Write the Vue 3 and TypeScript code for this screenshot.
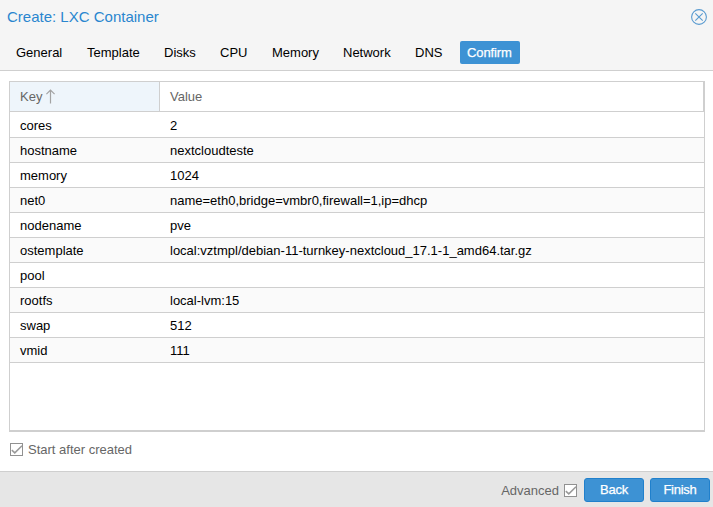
<script setup lang="ts">
import { ref } from 'vue'

interface Entry {
  key: string
  value: string
}

interface Tab {
  label: string
  width: number
}

const tabs: Tab[] = [
  { label: 'General', width: 62 },
  { label: 'Template', width: 68 },
  { label: 'Disks', width: 47 },
  { label: 'CPU', width: 43 },
  { label: 'Memory', width: 62 },
  { label: 'Network', width: 63 },
  { label: 'DNS', width: 44 },
  { label: 'Confirm', width: 60 },
]
const active = ref('Confirm')
const startAfter = ref(true)
const advanced = ref(true)

const entries: Entry[] = [
  { key: 'cores', value: '2' },
  { key: 'hostname', value: 'nextcloudteste' },
  { key: 'memory', value: '1024' },
  { key: 'net0', value: 'name=eth0,bridge=vmbr0,firewall=1,ip=dhcp' },
  { key: 'nodename', value: 'pve' },
  { key: 'ostemplate', value: 'local:vztmpl/debian-11-turnkey-nextcloud_17.1-1_amd64.tar.gz' },
  { key: 'pool', value: '' },
  { key: 'rootfs', value: 'local-lvm:15' },
  { key: 'swap', value: '512' },
  { key: 'vmid', value: '111' },
]
</script>

<template>
  <div class="window">
    <header class="head">
      <div class="titlebar">
        <span class="title">Create: LXC Container</span>
        <svg class="close" width="16" height="16" viewBox="0 0 16 16">
          <circle cx="8" cy="8" r="7.4" />
          <path d="M4.3 4.3 11.7 11.7M11.7 4.3 4.3 11.7" />
        </svg>
      </div>
      <nav class="tabs">
        <span
          v-for="tab in tabs"
          :key="tab.label"
          class="tab"
          :class="{ active: tab.label === active }"
          :style="{ width: tab.width + 'px' }"
          @click="active = tab.label"
        >{{ tab.label }}</span>
      </nav>
    </header>

    <main class="body">
      <section class="grid">
        <div class="columns">
          <div class="col sorted">
            <span>Key</span>
            <svg class="arrow" width="9" height="15" viewBox="0 0 9 15">
              <path d="M4.5 14.5V1M.4 5.2 4.5 1 8.6 5.2" />
            </svg>
          </div>
          <div class="col value">Value</div>
        </div>
        <div v-for="e in entries" :key="e.key" class="row">
          <span class="cell name">{{ e.key }}</span>
          <span class="cell">{{ e.value }}</span>
        </div>
      </section>
      <div class="option" @click="startAfter = !startAfter">
        <svg class="check" width="13" height="13" viewBox="0 0 13 13">
          <rect x=".5" y=".5" width="12" height="12" />
          <path v-if="startAfter" d="M1.8 7.1 4.8 9.9 12 2.8" />
        </svg>
        <span>Start after created</span>
      </div>
    </main>

    <footer class="foot">
      <div class="advanced" @click="advanced = !advanced">
        <span>Advanced</span>
        <svg class="check" width="13" height="13" viewBox="0 0 13 13">
          <rect x=".5" y=".5" width="12" height="12" />
          <path v-if="advanced" d="M1.8 7.1 4.8 9.9 12 2.8" />
        </svg>
      </div>
      <button class="btn">Back</button>
      <button class="btn">Finish</button>
    </footer>
  </div>
</template>

<style>
body {
  margin: 0;
}
</style>

<style scoped>
.window {
  box-sizing: border-box;
  width: 713px;
  height: 507px;
  display: flex;
  flex-direction: column;
  background: #fff;
  color: #000;
  font: 13px/17px "Liberation Sans", Arial, sans-serif;
  overflow: hidden;
}
.head {
  box-sizing: border-box;
  height: 71px;
  background: #f5f5f5;
  border-bottom: 1px solid #cfcfcf;
}
.titlebar {
  height: 41px;
  box-sizing: border-box;
  padding: 7px 6px 0 7px;
  display: flex;
  justify-content: space-between;
  align-items: flex-start;
}
.title {
  font-size: 15px;
  line-height: 20px;
  color: #2a86cf;
}
.close {
  margin-top: 2px;
  fill: none;
  stroke: #5a9bd0;
  stroke-width: 1.1;
}
.tabs {
  display: flex;
  gap: 9px;
  padding-left: 8px;
}
.tab {
  box-sizing: border-box;
  height: 23px;
  line-height: 23px;
  padding-left: 8px;
  border-radius: 2px;
  white-space: nowrap;
}
.tab.active {
  padding-left: 7px;
  background: #3d92d4;
  color: #fff;
  letter-spacing: -0.1px;
  -webkit-text-stroke: 0.25px #fff;
}
.body {
  flex: 1;
  padding: 10px 8px 0 9px;
}
.grid {
  box-sizing: border-box;
  height: 351px;
  border: 1px solid #cfcfcf;
  border-bottom-width: 2px;
}
.columns {
  display: flex;
  height: 29px;
  border-bottom: 1px solid #cfcfcf;
  border-right: 1px solid #cfcfcf;
  color: #666;
  line-height: 29px;
}
.col {
  box-sizing: border-box;
  padding-left: 10px;
}
.sorted {
  display: flex;
  align-items: center;
  gap: 4px;
  width: 150px;
  background: #eef5fb;
  border-right: 1px solid #cfcfcf;
}
.arrow {
  fill: none;
  stroke: #a3a3a3;
  stroke-width: 1.2;
}
.row {
  display: flex;
  height: 24px;
  line-height: 25px;
  border-bottom: 1px solid #cfcfcf;
}
.columns + .row {
  height: 25px;
  line-height: 27px;
}
.row:nth-child(odd) {
  background: #fafafa;
}
.cell {
  padding-left: 10px;
  white-space: nowrap;
}
.name {
  box-sizing: border-box;
  width: 150px;
}
.option {
  display: flex;
  align-items: center;
  gap: 5px;
  padding: 9px 0 0 1px;
  color: #666;
}
.check rect {
  fill: #fff;
  stroke: #919191;
}
.check path {
  fill: none;
  stroke: #999;
  stroke-width: 1.5;
}
.foot {
  box-sizing: border-box;
  height: 36px;
  padding: 6px 3px 0 0;
  display: flex;
  justify-content: flex-end;
  gap: 6px;
  background: #e6e6e6;
  border-top: 1px solid #cfcfcf;
}
.advanced {
  display: flex;
  align-items: center;
  gap: 5px;
  height: 25px;
  margin-right: 1px;
  color: #666;
}
.btn {
  box-sizing: border-box;
  width: 60px;
  height: 24px;
  padding: 0;
  border: 1px solid #2080cc;
  border-radius: 3px;
  background: #3d92d4;
  color: #fff;
  font: 13px/22px "Liberation Sans", Arial, sans-serif;
  letter-spacing: -0.25px;
  -webkit-text-stroke: 0.25px #fff;
}
</style>
